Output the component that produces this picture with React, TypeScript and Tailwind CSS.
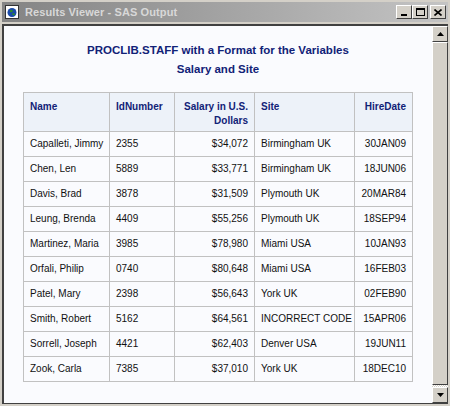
const rows = [
  ["Capalleti, Jimmy", "2355", "$34,072", "Birmingham UK", "30JAN09"],
  ["Chen, Len", "5889", "$33,771", "Birmingham UK", "18JUN06"],
  ["Davis, Brad", "3878", "$31,509", "Plymouth UK", "20MAR84"],
  ["Leung, Brenda", "4409", "$55,256", "Plymouth UK", "18SEP94"],
  ["Martinez, Maria", "3985", "$78,980", "Miami USA", "10JAN93"],
  ["Orfali, Philip", "0740", "$80,648", "Miami USA", "16FEB03"],
  ["Patel, Mary", "2398", "$56,643", "York UK", "02FEB90"],
  ["Smith, Robert", "5162", "$64,561", "INCORRECT CODE", "15APR06"],
  ["Sorrell, Joseph", "4421", "$62,403", "Denver USA", "19JUN11"],
  ["Zook, Carla", "7385", "$37,010", "York UK", "18DEC10"],
];

function TitleButton({ children, className = "" }: { children: React.ReactNode; className?: string }) {
  return (
    <div
      className={
        "w-[16px] h-[14px] bg-[#d4d0c8] border border-t-white border-l-white border-r-[#404040] border-b-[#404040] flex items-center justify-center " +
        className
      }
    >
      {children}
    </div>
  );
}

function ScrollButton({ down }: { down?: boolean }) {
  return (
    <div className="w-[16px] h-[16px] bg-[#d4d0c8] border border-t-white border-l-white border-r-[#404040] border-b-[#404040] flex items-center justify-center">
      <svg width="7" height="4" viewBox="0 0 7 4">
        {down ? <polygon points="0,0 7,0 3.5,4" fill="#000" /> : <polygon points="0,4 7,4 3.5,0" fill="#000" />}
      </svg>
    </div>
  );
}

export default function App() {
  const th = "border border-[#c1c1c1] bg-[#edf2f9] text-[#112277] font-bold align-top px-[6px] pt-[7px] pb-[3px] leading-[14px] whitespace-nowrap";
  const td = "border border-[#c1c1c1] px-[6px] h-[25px] leading-[14px] whitespace-nowrap";
  return (
    <div className="w-[450px] h-[406px] bg-[#d4d0c8] flex flex-col pt-[2px] px-[2px] overflow-hidden font-['Liberation_Sans',Arial,sans-serif]">
      <div className="h-[20px] flex items-center bg-gradient-to-r from-[#848484] to-[#c4c4c4] pl-[2px] pr-[2px]">
        <svg width="16" height="16" viewBox="0 0 16 16">
          <rect x="1.5" y="1.5" width="13" height="13" fill="#fff" stroke="#333" />
          <circle cx="8" cy="8.5" r="4.5" fill="#1a4aa8" />
          <path d="M6 6 q2 -1 3 1 q-1 2 -3 1z M9 9 q2 0 2 2 q-2 1 -3 -1z" fill="#2f8a2f" />
        </svg>
        <span className="ml-[5px] text-[11px] font-bold text-[#d8d8d8] tracking-[0.1px]">Results Viewer - SAS Output</span>
        <div className="ml-auto flex items-center">
          <TitleButton>
            <div className="w-[6px] h-[2px] bg-black mt-[6px]" />
          </TitleButton>
          <TitleButton>
            <div className="w-[9px] h-[8px] border border-black border-t-2" />
          </TitleButton>
          <TitleButton className="ml-[2px]">
            <svg width="8" height="7" viewBox="0 0 8 7">
              <path d="M0.5 0.5 L7.5 6.5 M7.5 0.5 L0.5 6.5" stroke="#000" strokeWidth="1.6" />
            </svg>
          </TitleButton>
        </div>
      </div>
      <div className="flex-1 flex mt-[2px] mb-[2px] border-l-2 border-t-2 border-[#404040] border-b border-b-[#404040]">
        <div className="flex-1 bg-[#fafbfe] flex flex-col items-center pt-[15px]">
          <div className="text-[#112277] font-bold text-[11.5px] leading-[19px] text-center">
            <div>PROCLIB.STAFF with a Format for the Variables</div>
            <div>Salary and Site</div>
          </div>
          <table className="mt-[13px] border-collapse table-fixed text-[10px] text-[#111] w-[389px]">
            <colgroup>
              <col className="w-[86px]" />
              <col className="w-[65px]" />
              <col className="w-[80px]" />
              <col className="w-[100px]" />
              <col className="w-[58px]" />
            </colgroup>
            <thead>
              <tr>
                <th className={th + " text-left"}>Name</th>
                <th className={th + " text-left"}>IdNumber</th>
                <th className={th + " text-right"}>
                  Salary in U.S.
                  <br />
                  Dollars
                </th>
                <th className={th + " text-left"}>Site</th>
                <th className={th + " text-right"}>HireDate</th>
              </tr>
            </thead>
            <tbody>
              {rows.map((r) => (
                <tr key={r[0]}>
                  <td className={td + " text-left"}>{r[0]}</td>
                  <td className={td + " text-left"}>{r[1]}</td>
                  <td className={td + " text-right"}>{r[2]}</td>
                  <td className={td + " text-left"}>{r[3]}</td>
                  <td className={td + " text-right"}>{r[4]}</td>
                </tr>
              ))}
            </tbody>
          </table>
        </div>
        <div className="w-[16px] flex flex-col bg-[repeating-conic-gradient(#ffffff_0%_25%,#d4d0c8_0%_50%)] bg-[length:2px_2px]">
          <ScrollButton />
          <div className="h-[343px] bg-[#d4d0c8] border border-t-white border-l-white border-r-[#404040] border-b-[#404040]" />
          <div className="flex-1" />
          <ScrollButton down />
        </div>
      </div>
    </div>
  );
}
